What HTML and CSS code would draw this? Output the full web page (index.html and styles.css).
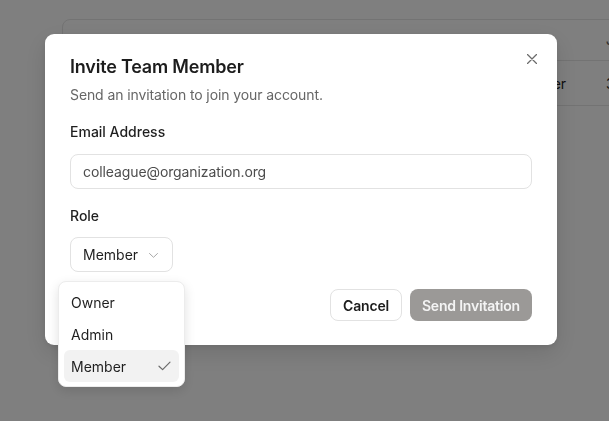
FILE: index.html
```html
<!DOCTYPE html>
<html lang="en">
<head>
<meta charset="utf-8">
<title>Invite Team Member</title>
<link rel="stylesheet" href="styles.css">
</head>
<body>
<div class="page">
  <div class="table-card">
    <div class="row head">
      <span class="cell c-name">Name</span>
      <span class="cell c-email">Email</span>
      <span class="cell c-role">Role</span>
      <span class="cell c-joined">Joined</span>
    </div>
    <div class="row">
      <span class="cell c-name">Jordan Lee</span>
      <span class="cell c-email">jordan@organization.org</span>
      <span class="cell c-role">Member</span>
      <span class="cell c-joined">3 days ago</span>
    </div>
  </div>
</div>

<div class="overlay"></div>

<div class="modal" role="dialog" aria-labelledby="m-title">
  <button class="close" aria-label="Close">
    <svg width="10" height="10" viewBox="0 0 10 10"><path d="M0.5 0.5 L9.5 9.5 M9.5 0.5 L0.5 9.5" stroke="#6b6b6b" stroke-width="1.3" stroke-linecap="round" fill="none"/></svg>
  </button>
  <div class="modal-head">
    <h2 id="m-title" class="title">Invite Team Member</h2>
    <p class="subtitle">Send an invitation to join your account.</p>
  </div>
  <div class="field">
    <label class="label">Email Address</label>
    <div class="input">colleague@organization.org</div>
  </div>
  <div class="field field-role">
    <label class="label">Role</label>
    <div class="select-wrap">
      <div class="select">
        <span>Member</span>
        <svg class="chev" width="9" height="5" viewBox="0 0 9 5"><path d="M0.5 0.5 L4.5 4.3 L8.5 0.5" stroke="#a8a8a8" stroke-width="1" fill="none" stroke-linecap="round" stroke-linejoin="round"/></svg>
      </div>
      <ul class="menu">
        <li class="item">Owner</li>
        <li class="item">Admin</li>
        <li class="item selected">Member
          <svg class="check" width="13" height="10" viewBox="0 0 13 10"><path d="M1 5.2 L4.6 8.6 L12 1.2" stroke="#6b6b6b" stroke-width="1.2" fill="none" stroke-linecap="round" stroke-linejoin="round"/></svg>
        </li>
      </ul>
    </div>
  </div>
  <div class="actions">
    <button class="btn btn-outline">Cancel</button>
    <button class="btn btn-primary" disabled>Send Invitation</button>
  </div>
</div>
</body>
</html>
```
FILE: styles.css
```css
* { box-sizing: border-box; }
html, body { margin: 0; padding: 0; }
body {
  width: 609px;
  height: 421px;
  overflow: hidden;
  background: #ffffff;
  font-family: Inter, "Noto Sans", sans-serif;
  color: #1c1c1c;
  position: relative;
}
.page {
  padding: 19px 0 0 62px;
}
.table-card {
  width: 640px;
  border: 1px solid #e6e6e6;
  border-radius: 8px;
  overflow: hidden;
}
.row {
  display: flex;
  align-items: center;
  height: 45px;
  font-size: 14px;
  color: #1c1c1c;
  border-top: 1px solid #e6e6e6;
  white-space: nowrap;
}
.row.head {
  height: 40px;
  border-top: none;
  font-size: 13px;
  font-weight: 500;
  color: #6b6b6b;
}
.cell { flex: none; padding-left: 16px; }
.c-name { width: 250px; }
.c-email { width: 244px; }
.c-role { width: 33px; }
.c-joined { width: 100px; }
.row .c-role { text-indent: -62px; }

.overlay {
  position: fixed;
  inset: 0;
  background: rgba(0, 0, 0, 0.5);
}
.modal {
  position: fixed;
  left: 45px;
  top: 34px;
  width: 512px;
  background: #fff;
  border-radius: 9px;
  box-shadow: 0 8px 24px rgba(0,0,0,0.12), 0 2px 6px rgba(0,0,0,0.08);
  padding: 24px 25px 24px 25px;
  display: flex;
  flex-direction: column;
}
.close {
  position: absolute;
  top: 20px;
  right: 20px;
  width: 10px;
  height: 10px;
  padding: 0;
  border: none;
  background: none;
  display: flex;
  align-items: center;
  justify-content: center;
}
.modal-head { margin-bottom: 17px; }
.title {
  margin: 0;
  font-size: 18px;
  line-height: 18px;
  font-weight: 600;
  letter-spacing: -0.2px;
  color: #1c1c1c;
}
.subtitle {
  margin: 9px 0 0;
  font-size: 14px;
  line-height: 20px;
  color: #666;
  letter-spacing: -0.1px;
}
.field {
  display: flex;
  flex-direction: column;
  gap: 12px;
}
.field-role { margin-top: 17px; gap: 11px; }
.label {
  font-size: 14px;
  line-height: 20px;
  font-weight: 500;
  color: #1f1f1f;
}
.input {
  height: 35px;
  border: 1px solid #e2e2e2;
  border-radius: 8px;
  padding: 0 12px;
  display: flex;
  align-items: center;
  font-size: 14px;
  color: #4d4d4d;
  letter-spacing: -0.1px;
}
.select-wrap {
  position: relative;
  align-self: flex-start;
}
.select {
  width: 103px;
  height: 35px;
  border: 1px solid #e2e2e2;
  border-radius: 8px;
  padding: 0 14px 0 12px;
  display: flex;
  align-items: center;
  justify-content: space-between;
  font-size: 14px;
  color: #1f1f1f;
}
.chev { margin-top: 1px; }
.menu {
  position: absolute;
  left: -12px;
  top: 44px;
  width: 127px;
  margin: 0;
  padding: 4px 5px;
  list-style: none;
  background: #fff;
  border: 1px solid #ececec;
  border-radius: 8px;
  box-shadow: 0 4px 12px rgba(0,0,0,0.12);
  z-index: 2;
}
.item {
  height: 32px;
  display: flex;
  align-items: center;
  justify-content: space-between;
  padding: 0 8px 0 7px;
  border-radius: 6px;
  font-size: 14px;
  color: #1f1f1f;
}
.item.selected { background: #f2f2f2; }
.actions {
  margin-top: 17px;
  display: flex;
  justify-content: flex-end;
  gap: 8px;
}
.btn {
  height: 32px;
  padding: 0 12px;
  border-radius: 8px;
  font-family: inherit;
  font-size: 14px;
  font-weight: 600;
  letter-spacing: -0.2px;
}
.btn-outline {
  background: #fff;
  border: 1px solid #e2e2e2;
  color: #1c1c1c;
}
.btn-primary {
  background: #9b9997;
  border: none;
  color: #f4f4f4;
}
```
